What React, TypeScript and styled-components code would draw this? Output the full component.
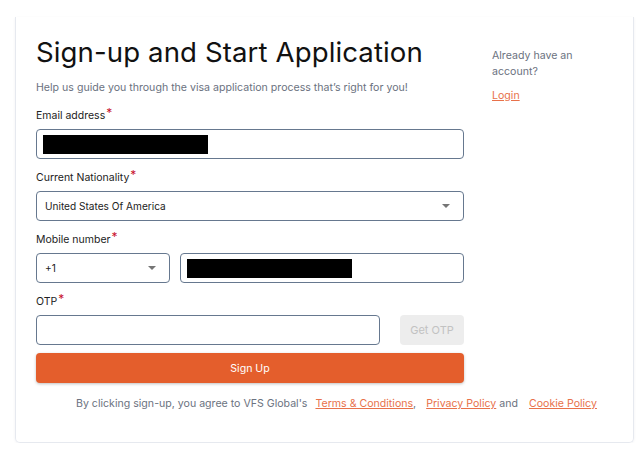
import React, {useState} from 'react';
import styled, {createGlobalStyle} from 'styled-components';

const GlobalStyle = createGlobalStyle`
  body {
    margin: 0;
    background: #ffffff;
    font-family: Inter, "Noto Sans", sans-serif;
  }
`;

const Page = styled.div`
  padding: 17px 10px 0 15px;
`;

// white card with faint outline
const Card = styled.div`
  width: 619px;
  height: 426px;
  box-sizing: border-box;
  border: 1px solid #e6e9ef;
  border-top: none;
  border-radius: 0 0 5px 5px;
  box-shadow: 0 1px 3px rgba(30, 40, 60, 0.06);
  display: flex;
  padding: 18px 0 0 20px;
`;

const Main = styled.div`
  width: 428px;
  display: flex;
  flex-direction: column;
`;

const Side = styled.div`
  margin-left: 28px;
  padding-top: 13px;
  width: 100px;
`;

const Title = styled.h1`
  margin: 0;
  font-size: 27.6px;
  font-weight: 400;
  color: #111;
  line-height: 34px;
  letter-spacing: 0.1px;
`;

const Subtitle = styled.p`
  margin: 11px 0 0;
  font-size: 10.6px;
  color: #6b7280;
  line-height: 16px;
`;

const Field = styled.div<{$first?: boolean}>`
  margin-top: ${p => p.$first ? '13px' : '12px'};
  display: flex;
  flex-direction: column;
`;

const Label = styled.label`
  display: block;
  height: 14px;
  font-size: 10.5px;
  color: #222;
  line-height: 14px;
  margin-bottom: 6px;
`;

const Star = styled.span`
  color: #c8102e;
  font-size: 12px;
  line-height: 0;
  position: relative;
  top: -2px;
  margin-left: 1px;
`;

const Input = styled.input<{$width?: string}>`
  box-sizing: border-box;
  height: 30px;
  width: ${p => p.$width || '100%'};
  border: 1px solid #66788f;
  border-radius: 4px;
  padding: 0 7px;
  font-family: inherit;
  font-size: 10px;
  color: #222;
  background: #fff;
  outline: none;
`;

const SelectBox = styled.div<{$width?: string}>`
  box-sizing: border-box;
  height: 30px;
  width: ${p => p.$width || '100%'};
  flex-shrink: 0;
  border: 1px solid #66788f;
  border-radius: 4px;
  padding: 0 13px 0 8px;
  display: flex;
  align-items: center;
  justify-content: space-between;
  font-size: 10.1px;
  color: #222;
`;

const Caret = styled.span`
  width: 0;
  height: 0;
  border-left: 4px solid transparent;
  border-right: 4px solid transparent;
  border-top: 4px solid #757575;
`;

const Row = styled.div<{$gap: number}>`
  display: flex;
  align-items: center;
  gap: ${p => p.$gap}px;
`;

// redacted value block
const Redacted = styled.div<{$w: number}>`
  width: ${p => p.$w}px;
  height: 19px;
  background: #000;
`;

const FilledInput = styled.div<{$grow?: boolean}>`
  box-sizing: border-box;
  height: 30px;
  flex: ${p => p.$grow ? '1' : 'none'};
  border: 1px solid #66788f;
  border-radius: 4px;
  padding: 0 6px;
  display: flex;
  align-items: center;
`;

const OtpButton = styled.button`
  width: 64px;
  height: 30px;
  border: none;
  border-radius: 4px;
  background: #ededed;
  color: #c2c2c2;
  font-family: inherit;
  font-size: 11px;
`;

const SignUp = styled.button`
  margin-top: 8px;
  height: 30px;
  width: 100%;
  border: none;
  border-radius: 4px;
  background: #e45e2c;
  color: #fff;
  font-family: inherit;
  font-size: 10.6px;
  box-shadow: 0 1px 3px rgba(0, 0, 0, 0.25);
`;

const Terms = styled.div`
  margin: 14px 0 0 40px;
  width: 540px;
  font-size: 10.6px;
  color: #6b7280;
  white-space: nowrap;
`;

const Link = styled.a<{$gap?: number}>`
  color: #e8714a;
  text-decoration: underline;
  margin-left: ${p => p.$gap ?? 0}px;
  cursor: pointer;
`;

const SideText = styled.p`
  margin: 0;
  font-size: 10.6px;
  line-height: 15.5px;
  color: #6b7280;
`;

const LoginLink = styled(Link)`
  display: inline-block;
  margin-top: 10px;
  font-size: 10.6px;
`;

function App() {
    const [otp, setOtp] = useState('');

    return (
        <Page>
            <GlobalStyle/>
            <Card>
                <Main>
                    <Title>Sign-up and Start Application</Title>
                    <Subtitle>Help us guide you through the visa application process that’s right for you!</Subtitle>

                    <Field $first>
                        <Label>Email address<Star>*</Star></Label>
                        <FilledInput><Redacted $w={165}/></FilledInput>
                    </Field>

                    <Field>
                        <Label>Current Nationality<Star>*</Star></Label>
                        <SelectBox>United States Of America<Caret/></SelectBox>
                    </Field>

                    <Field>
                        <Label>Mobile number<Star>*</Star></Label>
                        <Row $gap={10}>
                            <SelectBox $width="134px">+1<Caret/></SelectBox>
                            <FilledInput $grow><Redacted $w={165}/></FilledInput>
                        </Row>
                    </Field>

                    <Field>
                        <Label>OTP<Star>*</Star></Label>
                        <Row $gap={20}>
                            <Input $width="344px" value={otp} onChange={e => setOtp(e.target.value)}/>
                            <OtpButton disabled>Get OTP</OtpButton>
                        </Row>
                    </Field>

                    <SignUp>Sign Up</SignUp>
                    <Terms>
                        By clicking sign-up, you agree to VFS Global's
                        <Link $gap={8}>Terms &amp; Conditions</Link>,
                        <Link $gap={10}>Privacy Policy</Link> and
                        <Link $gap={11}>Cookie Policy</Link>
                    </Terms>
                </Main>
                <Side>
                    <SideText>Already have an account?</SideText>
                    <LoginLink>Login</LoginLink>
                </Side>
            </Card>
        </Page>
    );
}

export default App;
